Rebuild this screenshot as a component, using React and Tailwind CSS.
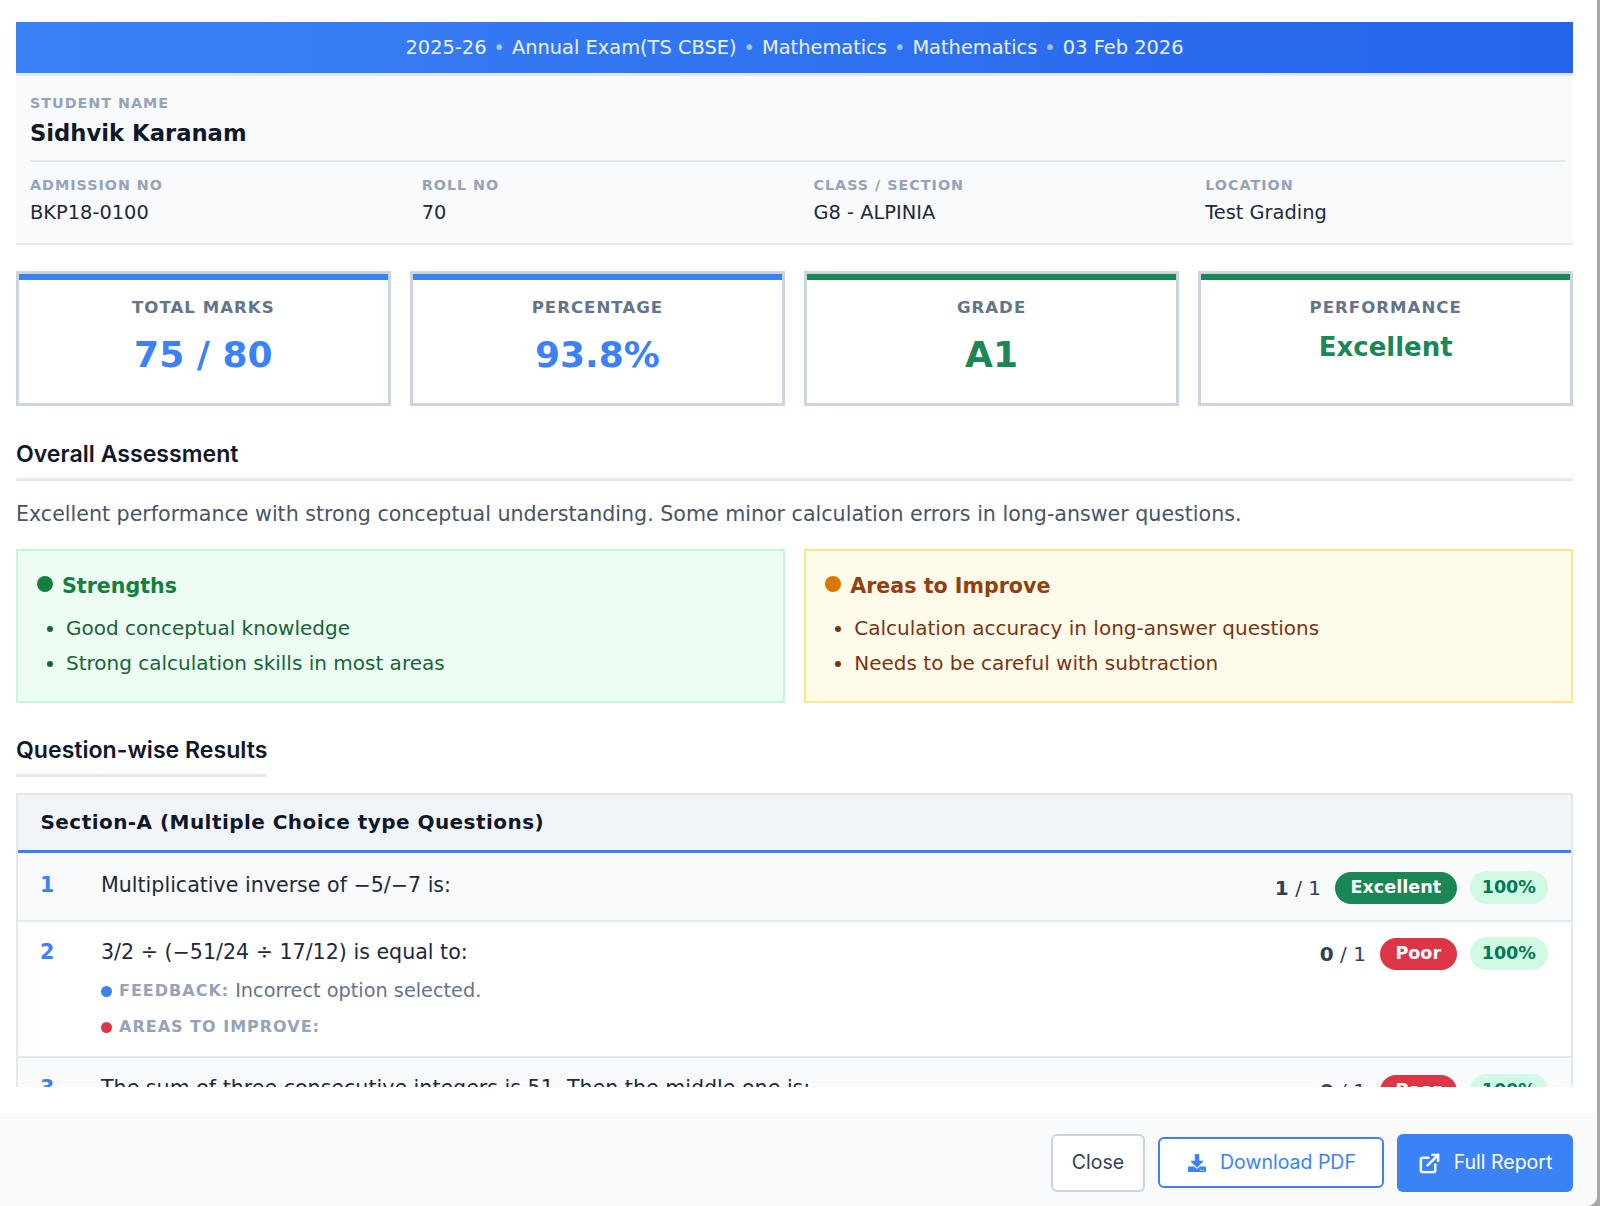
import React from "react";
import { FaDownload } from "react-icons/fa";
import { FiExternalLink } from "react-icons/fi";

const dejavu = "font-['DejaVu_Sans',sans-serif]";

const Stat = ({ label, value, color, bar, small }) => (
  <div className="border-[3px] border-[#cbd5e1] bg-white h-[135px] flex flex-col items-center">
    <div className={`h-[6px] w-full ${bar}`}></div>
    <div className="mt-[16px] text-[16.6px] leading-[24px] font-bold tracking-[1px] text-[#64748b]">{label}</div>
    <div className={`font-bold ${color} ${small ? "text-[26px] leading-[34px] mt-[10px]" : "text-[36px] leading-[50px] mt-[10px]"}`}>{value}</div>
  </div>
);

const Info = ({ label, value }) => (
  <div>
    <div className="text-[14.3px] leading-[20px] font-bold tracking-[1px] text-[#94a3b8]">{label}</div>
    <div className="mt-[4px] text-[19.4px] leading-[28px] text-[#1e293b]">{value}</div>
  </div>
);

const Pills = ({ score, badge, badgeColor, className }) => (
  <div className={`flex items-center shrink-0 h-[33px] ${className}`}>
    <span className="text-[20px] text-[#334155] mr-[14px]"><b>{score}</b> / 1</span>
    <span className={`h-[32px] rounded-full px-[15.5px] flex items-center text-[17.6px] font-bold text-white ${badgeColor}`}>{badge}</span>
    <span className="ml-[13px] h-[33px] rounded-full px-[12px] flex items-center text-[17.6px] font-bold text-[#047857] bg-[#d1fae5]">100%</span>
  </div>
);

export default function App() {
  return (
    <div className={`h-[1206px] w-full overflow-hidden bg-[#a8a8a8] ${dejavu}`}>
      <div className="h-full w-[1597px] bg-white rounded-br-[10px] overflow-hidden flex flex-col">
        <div className="h-[1087px] overflow-hidden pt-[22px] pl-4 shrink-0 w-[1573px]">
          <div className="h-[51px] bg-gradient-to-r from-[#3b82f6] to-[#2563eb] flex items-center justify-center text-[19.4px] text-white/90">
            <span>2025-26</span><span className="mx-[7px] text-white/60">•</span>
            <span>Annual Exam(TS CBSE)</span><span className="mx-[7px] text-white/60">•</span>
            <span>Mathematics</span><span className="mx-[7px] text-white/60">•</span>
            <span>Mathematics</span><span className="mx-[7px] text-white/60">•</span>
            <span>03 Feb 2026</span>
          </div>
          <div className="bg-[#f8fafc] border-t-[3px] border-b-2 border-[#e2e8f0] pl-[14px] pr-2 h-[172px]">
            <div className="pt-[17px] pb-[11px] border-b-2 border-[#e2e8f0]">
              <div className="text-[14.3px] leading-[20px] font-bold tracking-[1px] text-[#94a3b8]">STUDENT NAME</div>
              <div className="mt-[4px] text-[22.7px] leading-[32px] font-bold text-[#0f172a]">Sidhvik Karanam</div>
            </div>
            <div className="grid grid-cols-4 gap-8 pt-[13px]">
              <Info label="ADMISSION NO" value="BKP18-0100" />
              <Info label="ROLL NO" value="70" />
              <Info label="CLASS / SECTION" value="G8 - ALPINIA" />
              <Info label="LOCATION" value="Test Grading" />
            </div>
          </div>
          <div className="grid grid-cols-4 gap-[19.5px] mt-[26px]">
            <Stat label="TOTAL MARKS" value="75 / 80" color="text-[#3b82f6]" bar="bg-[#3b82f6]" />
            <Stat label="PERCENTAGE" value="93.8%" color="text-[#3b82f6]" bar="bg-[#3b82f6]" />
            <Stat label="GRADE" value="A1" color="text-[#1a8754]" bar="bg-[#1a8754]" />
            <Stat label="PERFORMANCE" value="Excellent" color="text-[#1a8754]" bar="bg-[#1a8754]" small />
          </div>
          <h2 className="mt-[32px] pb-[8px] border-b-[3px] border-[#e2e8f0] font-['Inter',sans-serif] text-[23.1px] leading-[32px] font-semibold text-[#0f172a]">Overall Assessment</h2>
          <p className="mt-[18px] text-[20.6px] leading-[30px] text-[#475569]">Excellent performance with strong conceptual understanding. Some minor calculation errors in long-answer questions.</p>
          <div className="grid grid-cols-2 gap-[19.5px] mt-[20px]">
            <div className="border-2 border-[#c6f6d5] bg-[#edfdf4] h-[154px] px-[19px] pt-[20px]">
              <div className="flex items-center text-[20.6px] leading-[30px] font-bold text-[#15803d]">
                <span className="w-4 h-4 rounded-full bg-[#15803d] mr-[9px] -mt-[5px]"></span>Strengths
              </div>
              <ul className="mt-[10px] text-[20px] leading-[35px] text-[#166534] list-disc pl-[29px]">
                <li>Good conceptual knowledge</li>
                <li>Strong calculation skills in most areas</li>
              </ul>
            </div>
            <div className="border-2 border-[#fde68a] bg-[#fffbeb] h-[154px] px-[19px] pt-[20px]">
              <div className="flex items-center text-[20.6px] leading-[30px] font-bold text-[#92400e]">
                <span className="w-4 h-4 rounded-full bg-[#d97706] mr-[9px] -mt-[5px]"></span>Areas to Improve
              </div>
              <ul className="mt-[10px] text-[20px] leading-[35px] text-[#78350f] list-disc pl-[29px]">
                <li>Calculation accuracy in long-answer questions</li>
                <li>Needs to be careful with subtraction</li>
              </ul>
            </div>
          </div>
          <h2 className="mt-[31px] inline-block pb-[8px] border-b-[3px] border-[#e2e8f0] font-['Inter',sans-serif] text-[23.1px] leading-[32px] font-semibold text-[#0f172a]">Question-wise Results</h2>
          <div className="mt-[16px] border-x-2 border-[#e2e8f0]">
            <div className="h-[60px] bg-[#f1f5f9] border-t-2 border-b-[3px] border-t-[#e2e8f0] border-b-[#3b82f6] flex items-center pl-[22.5px] pb-[1px] text-[20px] font-bold tracking-[0.45px] text-[#0f172a]">
              Section-A (Multiple Choice type Questions)
            </div>
            <div className="bg-[#f8fafc] h-[69px] border-b-2 border-[#e2e8f0] flex justify-between items-start pl-[22px] pr-[23px] pt-[17px]">
              <div className="flex text-[20.6px] leading-[30px] text-[#1e293b]">
                <span className="w-[61px] font-bold text-[#3b82f6]">1</span>
                <span>Multiplicative inverse of −5/−7 is:</span>
              </div>
              <Pills score="1" badge="Excellent" badgeColor="bg-[#1a8754]" className="mt-[1px]" />
            </div>
            <div className="bg-white h-[136px] border-b-2 border-[#e2e8f0] flex justify-between items-start pl-[22px] pr-[23px] pt-[15px]">
              <div className="flex text-[20.6px] leading-[30px] text-[#1e293b]">
                <span className="w-[61px] font-bold text-[#3b82f6]">2</span>
                <div>
                  <div>3/2 ÷ (−51/24 ÷ 17/12) is equal to:</div>
                  <div className="mt-[9px] flex items-center text-[19.3px] text-[#64748b]">
                    <span className="w-[11px] h-[11px] rounded-full bg-[#3b82f6] mr-[7px]"></span>
                    <span className="text-[16px] font-bold tracking-[1px] text-[#94a3b8] mr-[6px]">FEEDBACK:</span>Incorrect option selected.
                  </div>
                  <div className="mt-[6px] flex items-center">
                    <span className="w-[11px] h-[11px] rounded-full bg-[#dc3545] mr-[7px]"></span>
                    <span className="text-[16px] font-bold tracking-[1px] text-[#94a3b8]">AREAS TO IMPROVE:</span>
                  </div>
                </div>
              </div>
              <Pills score="0" badge="Poor" badgeColor="bg-[#dc3545]" />
            </div>
            <div className="bg-[#f8fafc] h-[69px] flex justify-between items-start pl-[22px] pr-[23px] pt-[15px]">
              <div className="flex text-[20.6px] leading-[30px] text-[#1e293b]">
                <span className="w-[61px] font-bold text-[#3b82f6]">3</span>
                <span>The sum of three consecutive integers is 51. Then the middle one is:</span>
              </div>
              <Pills score="0" badge="Poor" badgeColor="bg-[#dc3545]" className="mt-[1px]" />
            </div>
          </div>
        </div>
        <div className="mt-[26px] flex-1 bg-[#f8fafc] flex items-start justify-end gap-[13px] pt-[21px] pr-[24px] font-['Inter',sans-serif] text-[19.5px]">
          <button className="h-[58px] w-[94px] bg-white border-2 border-[#cbd5e1] rounded-[6px] text-[#334155]">Close</button>
          <button className="mt-[3px] h-[51px] w-[226px] bg-white border-2 border-[#3b82f6] rounded-[6px] text-[#3b82f6] flex items-center justify-center gap-[14px] pl-[2px]"><FaDownload className="w-[18px] h-[18px]" />Download PDF</button>
          <button className="h-[58px] w-[176px] bg-[#3b82f6] rounded-[6px] text-white flex items-center justify-center gap-[13px]"><FiExternalLink className="w-[23px] h-[23px]" strokeWidth={2.6} />Full Report</button>
        </div>
      </div>
    </div>
  );
}
